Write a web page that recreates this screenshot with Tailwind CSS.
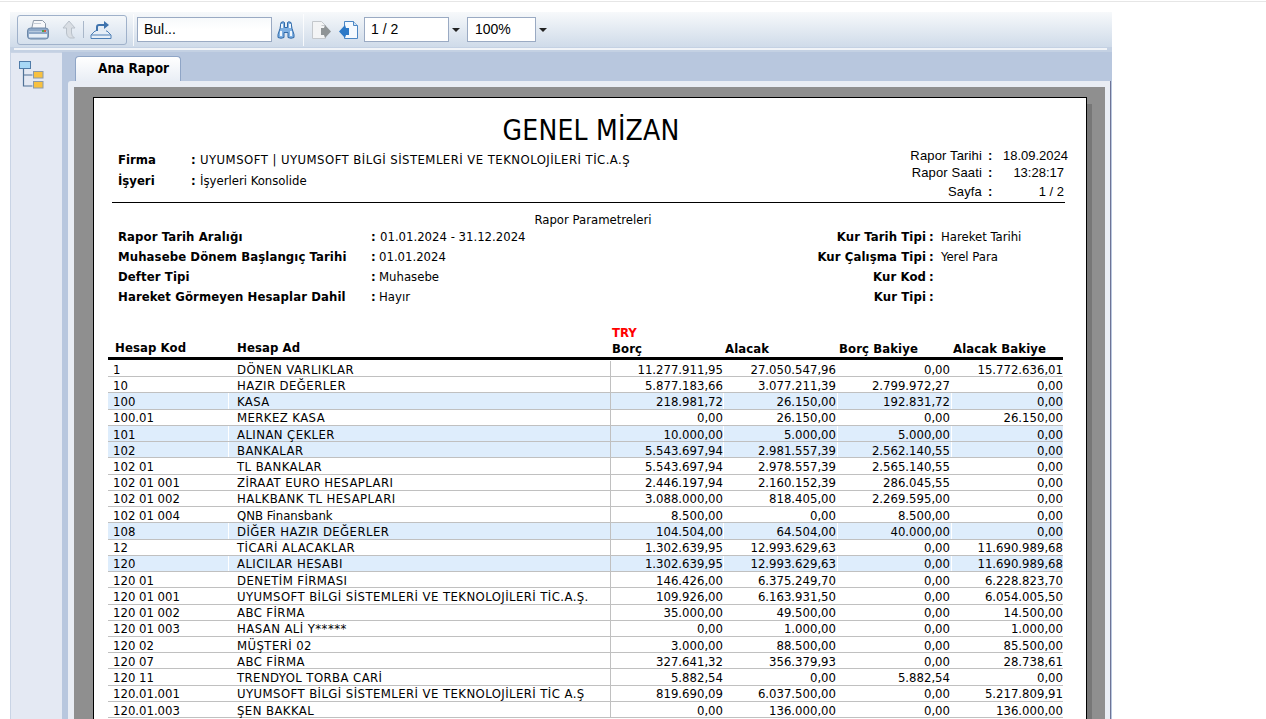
<!DOCTYPE html>
<html lang="tr">
<head>
  <meta charset="UTF-8">
  <title>Genel Mizan</title>
  <script src="https://cdn.jsdelivr.net/npm/@tailwindcss/browser@4"></script>
</head>
<body class="h-screen overflow-hidden bg-white text-black font-['DejaVu_Sans_Condensed','DejaVu_Sans',sans-serif]">
  <div class="h-[2px] border-b border-[#e6e6e6]"></div>
  <div class="ml-[10px] mt-[10px] w-[1102px] h-[707px] flex flex-col">

    <!-- toolbar -->
    <div class="h-[35px] shrink-0 flex items-center bg-linear-to-b from-[#f7f9fb] to-[#cfdbe9] pl-[7px] font-['Liberation_Sans',sans-serif] text-[14px]">
      <div class="w-[110px] h-[30px] flex items-center border border-[#9fb1ca] rounded-[3px] bg-linear-to-b from-[#f4f7fa] to-[#d5e0ed]">
        <svg class="ml-[9px] w-[22px] h-[20px]" viewBox="0 0 22 20">
          <path d="M6.500 0.500h9l3 3v6h-14z" fill="#f7f8fa" stroke="#8d99a8"/>
          <path d="M7 3.500h7" stroke="#c4ccd6"/>
          <path d="M3.500 8h15q3 0 3 3v5q0 3-3 3h-15q-3 0-3-3v-5q0-3 3-3z" fill="#8fa9c8" stroke="#6c88a8"/>
          <path d="M2 11.500h18" stroke="#b6c9de"/>
          <rect x="2" y="14" width="18" height="3.500" fill="#e6eef6"/>
          <rect x="15" y="10" width="2" height="2" fill="#4fa34f"/>
          <rect x="17" y="10" width="2" height="2" fill="#d0604a"/>
        </svg>
        <svg class="ml-[12px] w-[16px] h-[20px]" viewBox="0 0 16 20">
          <path d="M8 1l6 7h-3.500v5q0 3 3 5h-5q-3-2-3-5V8H2z" fill="#d9dee4" stroke="#b9c1ca"/>
        </svg>
        <div class="ml-[6px] w-px h-[17px] bg-[#a9b7c9]"></div>
        <svg class="ml-[6px] w-[22px] h-[20px]" viewBox="0 0 22 20">
          <path d="M7 12V7q0-2 2-2h6" fill="none" stroke="#3f73ad" stroke-width="2"/>
          <path d="M14 1l5 4-5 4z" fill="#3f73ad"/>
          <path d="M6 11h-1l-4 4v3.500h20V15l-4-4h-1" fill="#e6eef7" stroke="#4d7fb5"/>
          <path d="M1.500 15h19" stroke="#4d7fb5"/>
        </svg>
      </div>
      <div class="ml-[6px] w-px h-[32px] bg-white/80"></div>
      <div class="ml-[3px] w-[135px] h-[25px] flex items-center pl-[6px] bg-linear-to-b from-[#f7f9fb] via-white to-white border border-[#9aaac3]">Bul...</div>
      <svg class="ml-[5px] w-[18px] h-[18px]" viewBox="0 0 18 18">
        <path d="M4 1.500q2.500-1.500 3.500 0v5h3v-5q1-1.500 3.500 0l1 6 2 6v3q-3 1.500-6 0v-5H7v5q-3 1.500-6 0v-3l2-6z" fill="#7fb0e2" stroke="#2f69a8"/>
        <path d="M4 10v5M14 10v5M5 3v4M13 3v4" stroke="#eef6fd" stroke-width="2"/>
      </svg>
      <div class="ml-[8px] w-px h-[32px] bg-white/80"></div>
      <svg class="ml-[7px] w-[20px] h-[20px]" viewBox="0 0 20 20">
        <path d="M1.500 1.500h9l4 4v13h-13z" fill="#f3f4f5" stroke="#c4c8cc"/>
        <path d="M10.500 5.500h4" stroke="#c4c8cc"/>
        <path d="M10 8h3l1-3 6 6.500-6 6.500-1-3h-3z" fill="#8f9496"/>
      </svg>
      <svg class="ml-[8px] w-[20px] h-[20px]" viewBox="0 0 20 20">
        <path d="M5.500 1.500h9l4 4v13h-13z" fill="#f4f9fe" stroke="#4b86c4"/>
        <path d="M14.500 1.500v4h4" fill="#cfe3f6" stroke="#4b86c4"/>
        <path d="M10 8H7L6 5l-6 6.500L6 18l1-3h3z" fill="#2d79c7"/>
      </svg>
      <div class="ml-[5px] w-[85px] h-[25px] flex items-center pl-[6px] bg-white border border-[#9aaac3]">1 / 2</div>
      <div class="ml-[3px] w-0 h-0 border-x-[4px] border-x-transparent border-t-[4px] border-t-[#222]"></div>
      <div class="ml-[7px] w-[69px] h-[25px] flex items-center pl-[7px] bg-white border border-[#9aaac3]">100%</div>
      <div class="ml-[3px] w-0 h-0 border-x-[4px] border-x-transparent border-t-[4px] border-t-[#222]"></div>
    </div>
    <div class="h-[5px] shrink-0 bg-[#c4d1e3] pt-px pl-[4px] pr-[5px]"><div class="h-[2px] bg-[#f1f4f8]"></div></div>

    <div class="flex-1 min-h-0 flex bg-[#b8c7de]">
      <!-- tree panel -->
      <div class="w-[52px] shrink-0 bg-[#e4e9f3] border-l border-t border-[#c9d4e5] pl-[8px] pt-[8px]">
        <svg class="w-[25px] h-[28px]" viewBox="0 0 25 28">
          <path d="M4.500 8v17h9M4.500 14h9" fill="none" stroke="#4f7196" stroke-width="1.200"/>
          <rect x="0.500" y="0.500" width="11" height="7" fill="#a8d8f6" stroke="#4f7ba8"/>
          <rect x="14.500" y="10.500" width="9.500" height="6.500" fill="#f8c13f" stroke="#8c9aa8"/>
          <rect x="14.500" y="20.500" width="9.500" height="6.500" fill="#f8c13f" stroke="#8c9aa8"/>
        </svg>
      </div>

      <div class="flex-1 min-w-0 flex flex-col">
        <div class="h-[29px] shrink-0 pl-[13px] pt-[4px]">
          <div class="w-[106px] h-[25px] border border-b-0 border-[#8fa5c6] rounded-t-[4px] bg-linear-to-b from-white to-[#e9eef5] pl-[22px] pt-px text-[13.5px] font-bold">Ana Rapor</div>
        </div>
        <div class="flex-1 min-h-0 ml-[6px] mr-px bg-[#e9edf4] rounded-tl-[3px] border-r border-[#6e7396] pt-[6px] pl-[6px] pr-[5px]">
          <div class="h-full bg-[#8f8f8f] pt-[10px] pl-[19px] overflow-hidden">

            <!-- report page -->
            <div class="w-[994px] h-[800px] bg-white border border-black shadow-[5px_7px_0_#777777] text-[13px] leading-none">
              <h1 class="mt-[18px] h-[30px] pl-[2px] text-center text-[28px] leading-[30px] font-normal tracking-[0.2px]">GENEL MİZAN</h1>

              <div class="h-[56px] flex justify-between">
                <div class="pl-[24px] pt-[2px]">
                  <div class="h-[22px] flex items-center"><b class="w-[73px]">Firma</b><b class="w-[9px]">:</b><span class="tracking-[0.45px]">UYUMSOFT | UYUMSOFT BİLGİ SİSTEMLERİ VE TEKNOLOJİLERİ TİC.A.Ş</span></div>
                  <div class="h-[21px] flex items-center"><b class="w-[73px]">İşyeri</b><b class="w-[9px]">:</b><span>İşyerleri Konsolide</span></div>
                </div>
                <div class="w-[196px] pr-[18px] pt-px font-['Liberation_Sans',sans-serif]">
                  <div class="h-[17px] flex items-center"><span class="w-[92px] text-right tracking-[0.15px]">Rapor Tarihi</span><b class="w-[20px] pl-[6px]">:</b><span class="flex-1 text-right">18.09.2024</span></div>
                  <div class="h-[17px] flex items-center pr-[4px]"><span class="w-[92px] text-right tracking-[0.15px]">Rapor Saati</span><b class="w-[20px] pl-[6px]">:</b><span class="flex-1 text-right">13:28:17</span></div>
                  <div class="h-[20px] flex items-center pr-[4px]"><span class="w-[92px] text-right tracking-[0.15px]">Sayfa</span><b class="w-[20px] pl-[6px]">:</b><span class="flex-1 text-right">1 / 2</span></div>
                </div>
              </div>
              <div class="ml-[18px] w-[953px] border-t border-black"></div>

              <div class="mt-[9px] h-[14px] flex items-center justify-center pl-[6px]">Rapor Parametreleri</div>
              <div id="params" class="pl-[24px] [&_b]:tracking-[0.1px]">
                <div class="h-[20px] grid grid-cols-[253px_9px_320px_226px_15px_1fr] items-center"><b>Rapor Tarih Aralığı</b><b>:</b><span>01.01.2024 - 31.12.2024</span><b class="text-right">Kur Tarih Tipi</b><b class="pl-[3px]">:</b><span>Hareket Tarihi</span></div>
                <div class="h-[20px] grid grid-cols-[253px_9px_320px_226px_15px_1fr] items-center"><b>Muhasebe Dönem Başlangıç Tarihi</b><b>:</b><span class="-ml-px">01.01.2024</span><b class="text-right">Kur Çalışma Tipi</b><b class="pl-[3px]">:</b><span>Yerel Para</span></div>
                <div class="h-[20px] grid grid-cols-[253px_9px_320px_226px_15px_1fr] items-center"><b>Defter Tipi</b><b>:</b><span class="-ml-px">Muhasebe</span><b class="text-right">Kur Kod</b><b class="pl-[3px]">:</b><span></span></div>
                <div class="h-[20px] grid grid-cols-[253px_9px_320px_226px_15px_1fr] items-center"><b>Hareket Görmeyen Hesaplar Dahil</b><b>:</b><span class="-ml-px">Hayır</span><b class="text-right">Kur Tipi</b><b class="pl-[3px]">:</b><span></span></div>
              </div>

              <!-- table -->
              <div class="ml-[14px] w-[955px]">
                <div class="mt-[18px] h-[16px] pl-[504px] flex items-center font-bold text-[#ff0000]">TRY</div>
                <div class="h-[17px] grid grid-cols-[129px_375px_113px_114px_114px_110px] items-center font-bold tracking-[0.1px]">
                  <span class="pl-[7px] -mt-[3px]">Hesap Kod</span><span class="-mt-[3px]">Hesap Ad</span><span>Borç</span><span>Alacak</span><span>Borç Bakiye</span><span>Alacak Bakiye</span>
                </div>
                <div class="h-[3px] bg-black"></div>
                <div id="rows" class="pt-px"></div>
              </div>
            </div>
          </div>
        </div>
      </div>
    </div>
  </div>

  <script>
    const rows = [
      ['1', 'DÖNEN VARLIKLAR', '11.277.911,95', '27.050.547,96', '0,00', '15.772.636,01'],
      ['10', 'HAZIR DEĞERLER', '5.877.183,66', '3.077.211,39', '2.799.972,27', '0,00'],
      ['100', 'KASA', '218.981,72', '26.150,00', '192.831,72', '0,00', 1],
      ['100.01', 'MERKEZ KASA', '0,00', '26.150,00', '0,00', '26.150,00'],
      ['101', 'ALINAN ÇEKLER', '10.000,00', '5.000,00', '5.000,00', '0,00', 1],
      ['102', 'BANKALAR', '5.543.697,94', '2.981.557,39', '2.562.140,55', '0,00', 1],
      ['102 01', 'TL BANKALAR', '5.543.697,94', '2.978.557,39', '2.565.140,55', '0,00'],
      ['102 01 001', 'ZİRAAT EURO HESAPLARI', '2.446.197,94', '2.160.152,39', '286.045,55', '0,00'],
      ['102 01 002', 'HALKBANK TL HESAPLARI', '3.088.000,00', '818.405,00', '2.269.595,00', '0,00'],
      ['102 01 004', 'QNB Finansbank', '8.500,00', '0,00', '8.500,00', '0,00'],
      ['108', 'DİĞER HAZIR DEĞERLER', '104.504,00', '64.504,00', '40.000,00', '0,00', 1],
      ['12', 'TİCARİ ALACAKLAR', '1.302.639,95', '12.993.629,63', '0,00', '11.690.989,68'],
      ['120', 'ALICILAR HESABI', '1.302.639,95', '12.993.629,63', '0,00', '11.690.989,68', 1],
      ['120 01', 'DENETİM FİRMASI', '146.426,00', '6.375.249,70', '0,00', '6.228.823,70'],
      ['120 01 001', 'UYUMSOFT BİLGİ SİSTEMLERİ VE TEKNOLOJİLERİ TİC.A.Ş.', '109.926,00', '6.163.931,50', '0,00', '6.054.005,50'],
      ['120 01 002', 'ABC FİRMA', '35.000,00', '49.500,00', '0,00', '14.500,00'],
      ['120 01 003', 'HASAN ALİ Y*****', '0,00', '1.000,00', '0,00', '1.000,00'],
      ['120 02', 'MÜŞTERİ 02', '3.000,00', '88.500,00', '0,00', '85.500,00'],
      ['120 07', 'ABC FİRMA', '327.641,32', '356.379,93', '0,00', '28.738,61'],
      ['120 11', 'TRENDYOL TORBA CARİ', '5.882,54', '0,00', '5.882,54', '0,00'],
      ['120.01.001', 'UYUMSOFT BİLGİ SİSTEMLERİ VE TEKNOLOJİLERİ TİC A.Ş', '819.690,09', '6.037.500,00', '0,00', '5.217.809,91'],
      ['120.01.003', 'ŞEN BAKKAL', '0,00', '136.000,00', '0,00', '136.000,00'],
    ];

    document.getElementById('rows').innerHTML = rows.map((r) => {
      const bg = r[6] ? 'bg-[#deedfc]' : '';
      // only the upper-case names run wider than the font here
      const spacing = /[a-z]/.test(r[1]) ? '' : 'tracking-[0.42px]';
      return `<div class="h-[16.24px] grid grid-cols-[121px_382px_113px_114px_114px_111px] border-b border-[#c0c0c0] [&>div]:pt-px">
        <div class="${bg} border-r border-white pl-[5px] flex items-center">${r[0]}</div>
        <div class="${bg} ${spacing} border-r border-[#c0c0c0] pl-[8px] flex items-center">${r[1]}</div>
        <div class="${bg} border-r border-white flex items-center justify-end">${r[2]}</div>
        <div class="${bg} border-r border-white pr-px flex items-center justify-end">${r[3]}</div>
        <div class="${bg} border-r border-white pr-px flex items-center justify-end">${r[4]}</div>
        <div class="${bg} flex items-center justify-end">${r[5]}</div>
      </div>`;
    }).join('');
  </script>
</body>
</html>
